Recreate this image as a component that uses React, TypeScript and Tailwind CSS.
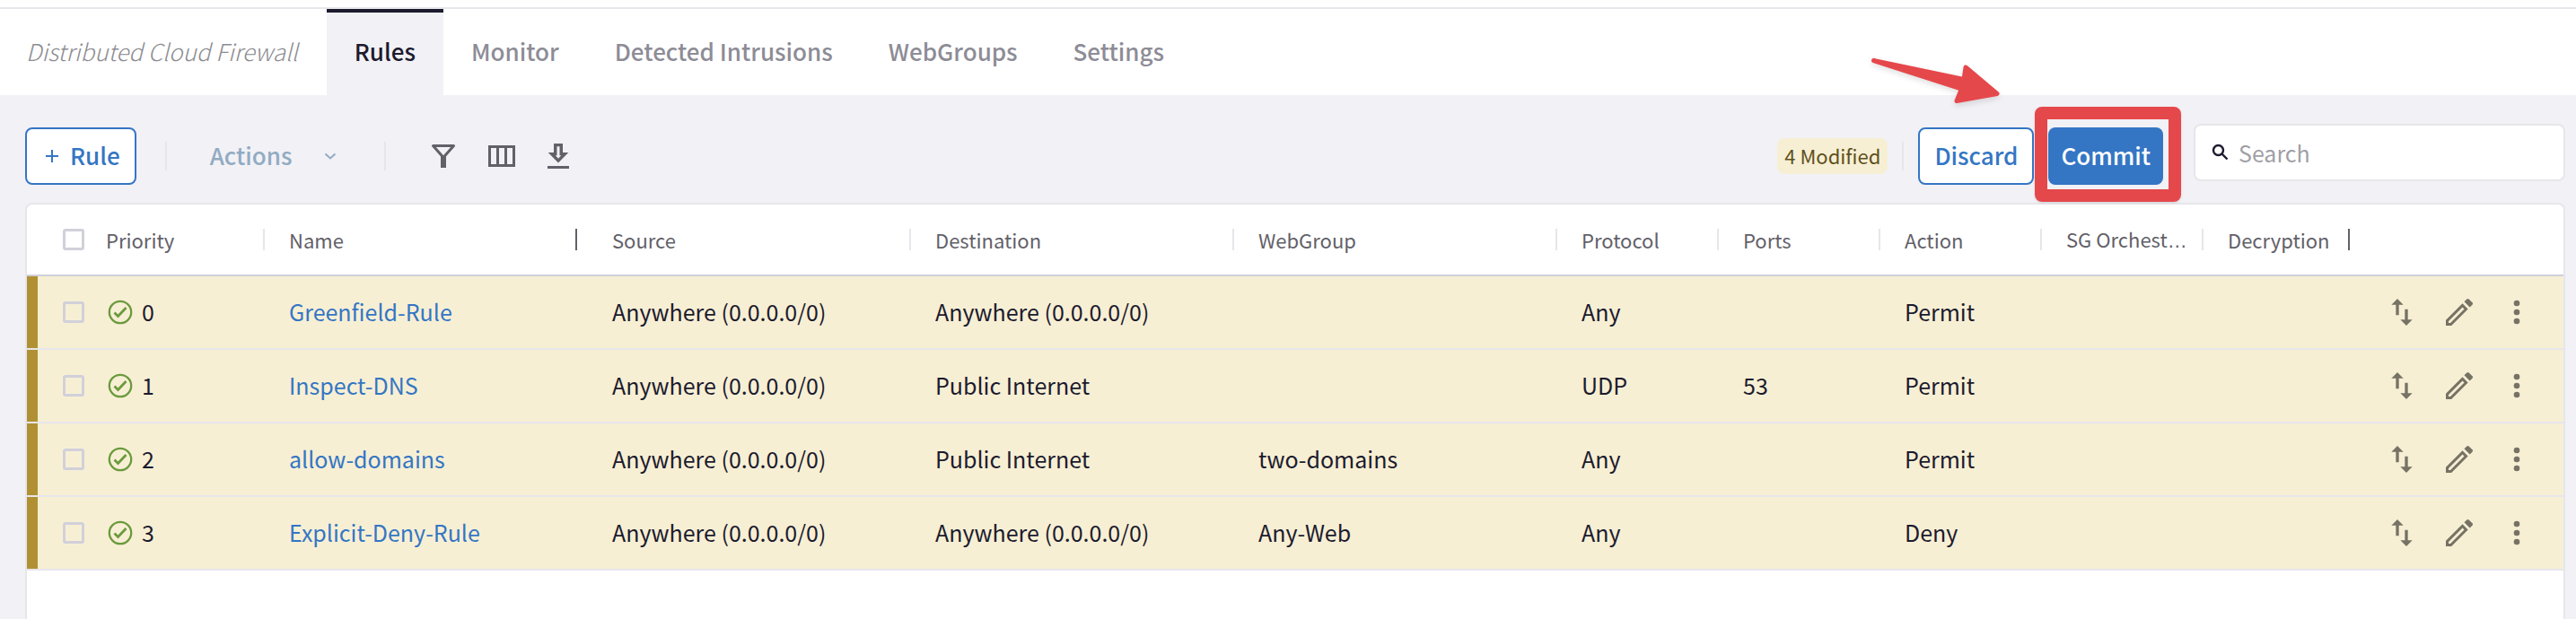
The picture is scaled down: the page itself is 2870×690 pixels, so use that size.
import type { ReactNode } from "react";
import { MdSwapVert } from "react-icons/md";

const tabs = ["Rules", "Monitor", "Detected Intrusions", "WebGroups", "Settings"];

const rules = [
  { priority: 0, name: "Greenfield-Rule", source: "Anywhere (0.0.0.0/0)", destination: "Anywhere (0.0.0.0/0)", webGroup: "", protocol: "Any", ports: "", action: "Permit" },
  { priority: 1, name: "Inspect-DNS", source: "Anywhere (0.0.0.0/0)", destination: "Public Internet", webGroup: "", protocol: "UDP", ports: "53", action: "Permit" },
  { priority: 2, name: "allow-domains", source: "Anywhere (0.0.0.0/0)", destination: "Public Internet", webGroup: "two-domains", protocol: "Any", ports: "", action: "Permit" },
  { priority: 3, name: "Explicit-Deny-Rule", source: "Anywhere (0.0.0.0/0)", destination: "Anywhere (0.0.0.0/0)", webGroup: "Any-Web", protocol: "Any", ports: "", action: "Deny" },
];

const columns: { label: ReactNode; width: string; pinned?: boolean }[] = [
  { label: "Name", width: "w-[360px]", pinned: true },
  { label: "Source", width: "w-[360px]" },
  { label: "Destination", width: "w-[360px]" },
  { label: "WebGroup", width: "w-[360px]" },
  { label: "Protocol", width: "w-[180px]" },
  { label: "Ports", width: "w-[180px]" },
  { label: "Action", width: "w-[180px]" },
  { label: <>SG Orchest<span className="font-['Liberation_Sans',sans-serif]">…</span></>, width: "w-[180px]" },
  { label: "Decryption", width: "w-[175px]", pinned: true },
];

function Divider() {
  return <span className="h-8 w-0.5 shrink-0 bg-[#e6e6eb]" />;
}

function Checkbox({ label }: { label: string }) {
  return (
    <input
      type="checkbox"
      aria-label={label}
      className="block size-6 shrink-0 appearance-none rounded-[3px] border-[3px] border-[#d1d0da]"
    />
  );
}

function Cell({ children }: { children?: ReactNode }) {
  return <td className="border-b-2 border-[#e6e6eb] pt-0 pr-0 pb-0.5 pl-[27px]">{children}</td>;
}

function FilterIcon() {
  return (
    <svg viewBox="0 0 28 28" className="size-7" fill="none" stroke="currentColor" strokeWidth="3">
      <path d="M2.5 2.5h23L14 15.500z" strokeLinejoin="round" />
      <path d="M14 14v13" strokeWidth="6" />
    </svg>
  );
}

function ColumnsIcon() {
  return (
    <svg viewBox="0 0 30 24" className="h-6 w-[30px]" fill="none" stroke="currentColor" strokeWidth="3">
      <path d="M1.500 1.500h27v21h-27zM10.500 1.500v21M19.500 1.500v21" />
    </svg>
  );
}

function DownloadIcon() {
  return (
    <svg viewBox="0 0 24 28" className="h-7 w-6" fill="currentColor">
      <path fillRule="evenodd" d="M7 0h10v10H23.300L12 21.500 0.700 10H7zM10.500 3.300v10H8.800l3.200 3.400 3.200-3.400H13.500V3.300z" />
      <path d="M0 25h24v3H0z" />
    </svg>
  );
}

function SearchIcon() {
  return (
    <svg viewBox="0 0 24 24" className="size-6 shrink-0" fill="none" stroke="currentColor" strokeWidth="2.400">
      <circle cx="9.500" cy="9.500" r="5.500" />
      <path d="M13.500 13.500l6 6" />
    </svg>
  );
}

function CheckIcon() {
  return (
    <svg viewBox="0 0 28 28" className="size-7 shrink-0" fill="none" stroke="#6b9a3d">
      <circle cx="14" cy="14" r="12.200" strokeWidth="2.300" />
      <path d="M7.500 14.500l4 4 9-9.500" strokeWidth="2.800" />
    </svg>
  );
}

function PencilIcon() {
  return (
    <svg viewBox="0 0 24 24" className="size-10" fill="currentColor" fillRule="evenodd">
      <path d="M14.100 6.200L3 17.300V21h3.700L17.800 9.900zM14.100 8.700l1.200 1.200L6 19.200H4.800V18z" />
      <path d="M15.300 5l1.700-1.700a1 1 0 0 1 1.400 0l2.300 2.300a1 1 0 0 1 0 1.400L19 8.700z" />
    </svg>
  );
}

function MoreIcon() {
  return (
    <svg viewBox="0 0 24 24" className="size-10" fill="currentColor">
      <circle cx="12" cy="6" r="2" />
      <circle cx="12" cy="12" r="2" />
      <circle cx="12" cy="18" r="2" />
    </svg>
  );
}

export default function App() {
  return (
    <div className="flex min-h-screen flex-col bg-[#f2f1f6] font-['Noto_Sans_CJK_SC','Noto_Sans',sans-serif] text-[25px] leading-9 text-[#1c1b2e]">
      <header className="bg-white pt-2">
        <div className="flex h-[98px] items-stretch border-t-2 border-[#e6e6eb] text-[26px]">
          <h1 className="flex items-center pr-8 pb-0.5 pl-[29px] font-light text-[#8c8c91] italic">Distributed Cloud Firewall</h1>
          <nav className="flex">
            {tabs.map((tab, i) => (
              <a
                key={tab}
                href="#"
                className={
                  i === 0
                    ? "flex items-center border-t-4 border-[#1c1b2e] bg-[#f2f1f6] px-[31px] pb-1.5 font-medium"
                    : "flex items-center px-[31px] pb-0.5 font-medium text-[#8d8c96]"
                }
              >
                {tab}
              </a>
            ))}
          </nav>
        </div>
      </header>

      <div className="flex items-center gap-8 pt-8 pr-3 pl-7">
        <button className="mt-1 flex h-16 items-center gap-3 rounded-lg border-2 border-[#3476c4] bg-white pr-4 pl-5 text-[26px] font-medium text-[#3476c4]">
          <svg viewBox="0 0 16 16" className="size-4" stroke="currentColor" strokeWidth="2">
            <path d="M8 1v14M1 8h14" />
          </svg>
          <span className="pb-0.5">Rule</span>
        </button>
        <div className="mt-1 flex items-center">
          <Divider />
          <button className="ml-12 flex items-center gap-9 text-[26px] font-medium text-[#91abc2]">
            <span className="pb-0.5">Actions</span>
            <svg viewBox="0 0 14 14" className="size-3.5" fill="none" stroke="currentColor" strokeWidth="2">
              <path d="M1.500 4.500l5.500 5 5.500-5" />
            </svg>
          </button>
          <span className="ml-[53px] flex"><Divider /></span>
          <div className="ml-[50px] flex items-center gap-9 text-[#626068]">
            <button aria-label="Filter"><FilterIcon /></button>
            <button aria-label="Columns"><ColumnsIcon /></button>
            <button aria-label="Download"><DownloadIcon /></button>
          </div>
        </div>

        <div className="ml-auto flex items-center">
          <div className="mt-1 flex items-center gap-4">
            <span className="flex h-10 items-center rounded-lg bg-[#f7efd4] px-2 pb-0.5 text-[22px] text-[#5e5020]">4 Modified</span>
            <Divider />
            <button className="h-16 rounded-lg border-2 border-[#3476c4] bg-white px-4 pb-0.5 text-[26px] font-medium text-[#3476c4]">Discard</button>
            <div className="relative">
              <button className="h-16 rounded-lg bg-[#3476c4] px-3.5 pb-0.5 text-[26px] font-medium text-white">Commit</button>
              <span className="pointer-events-none absolute -top-[23px] -right-5 -bottom-[19px] -left-[15px] rounded-lg border-[14px] border-[#e5484b] shadow" />
              <svg viewBox="0 0 150 60" className="pointer-events-none absolute -top-[82px] -left-[200px] h-[60px] w-[150px] overflow-visible drop-shadow-md" fill="#e5484b" stroke="#e5484b" strokeWidth="5" strokeLinejoin="round">
                <path d="M5.500 7.500L106 28.500 108 15 143 44.500 98 52.500 103.500 39z" />
              </svg>
            </div>
          </div>
          <label className="mb-1 ml-[34px] flex h-16 w-[414px] items-center gap-2 rounded-lg border-2 border-[#e6e6eb] bg-white px-4">
            <SearchIcon />
            <input type="search" aria-label="Search" placeholder="Search" className="w-full bg-transparent outline-none placeholder:text-[#a09fa6]" />
          </label>
        </div>
      </div>

      <main className="mt-5 mr-3 ml-7 flex-1 overflow-hidden rounded-t-lg border-2 border-b-0 border-[#e6e6eb] bg-white">
        <table className="w-full table-fixed border-separate border-spacing-0 text-left">
          <thead className="text-[22px] text-[#626068]">
            <tr className="h-20">
              <th className="w-[265px] border-b-2 border-[#cfcfd9] p-0 font-normal">
                <div className="flex items-center gap-6 pl-10">
                  <Checkbox label="Select all rules" />
                  Priority
                  <span className="ml-auto h-6 w-0.5 bg-[#e6e6eb]" />
                </div>
              </th>
              {columns.map((c, i) => (
                <th key={i} className={`${c.width} border-b-2 border-[#cfcfd9] p-0 font-normal`}>
                  <div className={c.pinned ? "flex items-center gap-1 pr-3 pl-[27px]" : "flex items-center gap-1 pl-[27px]"}>
                    <span className="min-w-0 flex-1 whitespace-nowrap">{c.label}</span>
                    <span className={c.pinned ? "h-6 w-0.5 shrink-0 bg-[#626068]" : "h-6 w-0.5 shrink-0 bg-[#e6e6eb]"} />
                  </div>
                </th>
              ))}
              <th aria-label="Row actions" className="border-b-2 border-[#cfcfd9] p-0" />
            </tr>
          </thead>
          <tbody>
            {rules.map((r) => (
              <tr key={r.priority} className="h-[82px] bg-[#f7efd4]">
                <td className="border-b-2 border-[#e6e6eb] p-0">
                  <div className="flex h-20 items-center gap-[26px] border-l-12 border-[#b19034] pl-7">
                    <Checkbox label={`Select ${r.name}`} />
                    <span className="flex items-center gap-2.5">
                      <CheckIcon />
                      <span className="pb-0.5">{r.priority}</span>
                    </span>
                  </div>
                </td>
                <Cell><a href="#" className="text-[#3476c4]">{r.name}</a></Cell>
                <Cell>{r.source}</Cell>
                <Cell>{r.destination}</Cell>
                <Cell>{r.webGroup}</Cell>
                <Cell>{r.protocol}</Cell>
                <Cell>{r.ports}</Cell>
                <Cell>{r.action}</Cell>
                <Cell />
                <Cell />
                <td className="border-b-2 border-[#e6e6eb] p-0">
                  <div className="flex items-center justify-end gap-6 pr-8 text-[#767264]">
                    <button aria-label="Move rule"><MdSwapVert className="size-10" /></button>
                    <button aria-label="Edit rule"><PencilIcon /></button>
                    <button aria-label="More options"><MoreIcon /></button>
                  </div>
                </td>
              </tr>
            ))}
          </tbody>
        </table>
      </main>
    </div>
  );
}
